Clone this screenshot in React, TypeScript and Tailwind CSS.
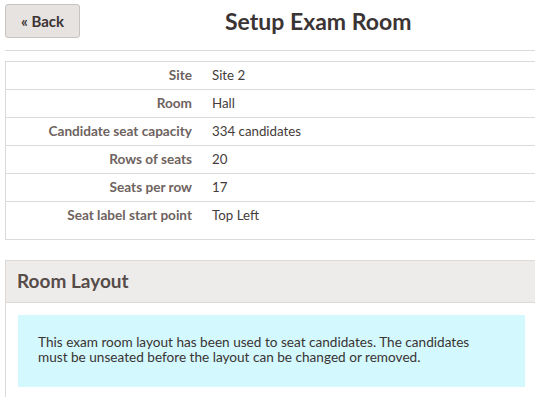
const rows = [
  { label: "Site", value: "Site 2" },
  { label: "Room", value: "Hall" },
  { label: "Candidate seat capacity", value: "334 candidates" },
  { label: "Rows of seats", value: "20" },
  { label: "Seats per row", value: "17" },
  { label: "Seat label start point", value: "Top Left" },
];

function App() {
  return (
    <div className="min-h-[397px] overflow-hidden bg-white pl-[5px] font-['Lato',sans-serif] text-[#433b39]">
      <div className="flex items-start pt-[4px]">
        <button className="h-[34px] w-[75px] rounded-[3px] border border-[#c8c3c0] bg-[#e7e3e1] text-[15px] font-bold text-[#3b3434]">
          « Back
        </button>
        <h1 className="ml-[145px] mt-[3px] text-[23px] font-bold leading-[28px] text-[#3b3434]">
          Setup Exam Room
        </h1>
      </div>
      <div className="mt-[12px] border-t border-[#dcd9d7]" />

      <div className="mt-[10px] border-y border-l border-[#dcd9d7] pb-[10px]">
        {rows.map((row, i) => (
          <div
            key={row.label}
            className={`flex h-[27px] items-center ${i > 0 ? "box-content border-t border-[#dcd9d7]" : ""}`}
          >
            <div className="w-[195px] pr-[9px] text-right text-[13.6px] font-bold text-[#6e6360]">
              {row.label}
            </div>
            <div className="pl-[11px] text-[13.3px] text-[#443c3a]">{row.value}</div>
          </div>
        ))}
      </div>

      <div className="mt-[20px] border-l border-t border-[#dcd9d7]">
        <div className="flex h-[42px] items-center border-b border-[#dcd9d7] bg-[#eeeceb] pl-[11px] text-[19px] font-bold text-[#564c49]">
          Room Layout
        </div>
        <div className="pb-[20px] pl-[12px] pr-[10px] pt-[12px]">
          <div className="h-[72px] bg-[#d3f8fd] px-[20px] pt-[20px] text-[13.6px] leading-[15px] text-[#3a3433]">
            This exam room layout has been used to seat candidates. The candidates
            <br />
            must be unseated before the layout can be changed or removed.
          </div>
        </div>
      </div>
    </div>
  );
}

export default App;
